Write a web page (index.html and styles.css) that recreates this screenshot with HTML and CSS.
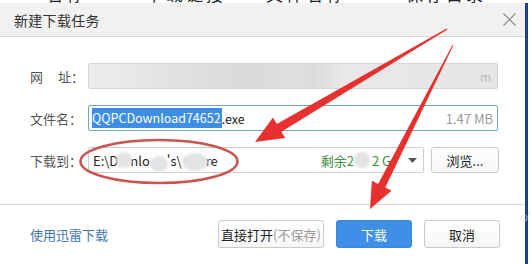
FILE: index.html
```html
<!DOCTYPE html>
<html lang="zh-CN">
<head>
<meta charset="utf-8">
<title>新建下载任务</title>
<link rel="stylesheet" href="styles.css">
</head>
<body>
<div class="page">
  <div class="behind"><span class="behind-text">名称　　　下载链接　　文件名称　　　保存目录　　　操作选项</span></div>
  <div class="frame">
    <div class="dialog">
      <div class="titlebar">
        <span class="title">新建下载任务</span>
        <svg class="close" width="13" height="13" viewBox="0 0 13 13"><path d="M0.5 0.5 L12.5 12.5 M12.5 0.5 L0.5 12.5" stroke="#8a8a8a" stroke-width="1.2" fill="none"/></svg>
      </div>
      <div class="content">
        <div class="row">
          <span class="label">网<span class="gap"></span>址：</span>
          <div class="field url"><span class="url-end">m</span></div>
        </div>
        <div class="row">
          <span class="label">文件名：</span>
          <div class="field name"><span class="sel">QQPCDownload74652</span><span class="ext">.exe</span><span class="size">1.47 MB</span></div>
        </div>
        <div class="row">
          <span class="label">下载到：</span>
          <div class="combo">
            <span class="path">E:\D<span class="blob b1"></span>nlo<span class="blob b2"></span>'s\<span class="blob b3"></span>re</span>
            <span class="free">剩余2<span class="blob b4"></span>2 G</span>
            <svg class="caret" width="9" height="5" viewBox="0 0 9 5"><path d="M0 0 L9 0 L4.5 5 Z" fill="#555"/></svg>
          </div>
          <div class="btn browse">浏览...</div>
        </div>
      </div>
      <div class="footer">
        <span class="link">使用迅雷下载</span>
        <div class="buttons">
          <div class="btn open">直接打开<span class="muted">(不保存)</span></div>
          <div class="btn primary">下载</div>
          <div class="btn cancel">取消</div>
        </div>
      </div>
    </div>
    <div class="edge"></div>
  </div>

  <svg class="marks" width="531" height="264" viewBox="0 0 531 264">
    <g fill="none" stroke="#dcdcdc" stroke-opacity="0.55" stroke-width="1.2">
      <circle cx="524" cy="218" r="3"/>
      <circle cx="532" cy="213" r="3"/>
    </g>
    <ellipse cx="159" cy="161.5" rx="78.5" ry="21.5" fill="none" stroke="#c8403f" stroke-width="2.6" opacity="0.9"/>
    <polygon fill="#e8302f" points="446.6,28.4 276.8,123.9 273.0,117.5 255,142 285.2,138.1 281.4,131.7 447.4,29.6"/>
    <polygon fill="#e8302f" points="452.6,44.7 378.1,184.0 371.9,180.8 370,209 391.5,190.8 385.3,187.6 453.4,45.3"/>
  </svg>
</div>
</body>
</html>
```
FILE: styles.css
```css
* { box-sizing: border-box; }
html, body { margin: 0; padding: 0; }
body {
  width: 531px;
  height: 264px;
  overflow: hidden;
  background: #ffffff;
  font-family: "Noto Sans CJK SC", "Noto Sans", sans-serif;
  color: #333;
}
.page {
  position: relative;
  width: 531px;
  height: 264px;
  display: flex;
  flex-direction: column;
}
.behind {
  height: 3px;
  overflow: hidden;
  background: #fff;
}
.behind-text {
  display: block;
  margin-top: -16px;
  margin-left: 46px;
  font-size: 17px;
  line-height: 19px;
  color: #222;
  white-space: nowrap;
  letter-spacing: 3px;
}
.frame {
  flex: 1;
  display: flex;
}
.dialog {
  width: 525px;
  display: flex;
  flex-direction: column;
  background: #fff;
}
.edge {
  width: 3px;
  background: #1d3f8c;
}
.titlebar {
  height: 34px;
  background: #f1f1f1;
  border-bottom: 1px solid #d6d6d6;
  display: flex;
  align-items: center;
  justify-content: space-between;
  padding: 0 9px 0 14px;
}
.title {
  font-size: 14px;
  color: #333;
  letter-spacing: 0.3px;
}
.close { display: block; }
.content {
  padding: 26px 0 0 30px;
  display: flex;
  flex-direction: column;
  gap: 16px;
  height: 168px;
  border-bottom: 1px solid #dcdcdc;
}
.row {
  display: flex;
  align-items: center;
  height: 26px;
}
.label {
  width: 58px;
  font-size: 13px;
  color: #555;
  display: flex;
}
.gap { width: 15px; }
.field {
  width: 410px;
  height: 26px;
  border: 1px solid #cfcfcf;
  border-radius: 2px;
  display: flex;
  align-items: center;
  font-size: 12.5px;
}
.url {
  background: linear-gradient(90deg, #ececec 0%, #e9e9e9 8%, #e2e2e2 20%, #d9d9d9 40%, #e0e0e0 50%, #dadada 55%, #e8e8e8 62%, #e6e6e6 100%);
  justify-content: flex-end;
  padding-right: 6px;
  border-color: #d4d4d4;
}
.url-end {
  color: #b8b8b8;
  font-size: 12px;
}
.name {
  border-color: #6da4c8;
  padding: 0 4px 0 3px;
  color: #222;
}
.sel {
  background: #3d8ee4;
  color: #fff;
  line-height: 20px;
  padding-right: 1px;
}
.ext { flex: 1; }
.size {
  color: #9a9a9a;
  font-size: 13px;
}
.combo {
  width: 336px;
  height: 26px;
  border: 1px solid #cfcfcf;
  border-radius: 2px;
  display: flex;
  align-items: center;
  padding: 0 6px 0 4px;
  font-size: 13px;
}
.path {
  flex: 1;
  color: #222;
  display: flex;
  align-items: center;
  white-space: nowrap;
}
.blob {
  display: inline-block;
  border-radius: 50%;
  background: #e3e3e3;
  filter: blur(1px);
}
.b1 { width: 16px; height: 16px; margin: 0 -2px 0 -2px; }
.b2 { width: 18px; height: 16px; margin: 8px -1px 0 0; }
.b3 { width: 26px; height: 18px; margin: 4px -2px 0 0; }
.b4 { width: 16px; height: 16px; margin: 0 2px 0 0; }
.free {
  color: #3f8d3f;
  display: flex;
  align-items: center;
  margin-right: 17px;
  white-space: nowrap;
}
.caret { display: block; }
.btn {
  height: 26px;
  border: 1px solid #c9c9c9;
  border-radius: 3px;
  background: linear-gradient(#ffffff, #f6f6f6);
  display: flex;
  align-items: center;
  justify-content: center;
  font-size: 13px;
  color: #222;
}
.browse {
  width: 68px;
  margin-left: 7px;
}
.footer {
  display: flex;
  align-items: center;
  justify-content: space-between;
  padding: 15px 25px 0 30px;
}
.link {
  font-size: 13px;
  color: #3f78ad;
}
.buttons {
  display: flex;
  gap: 12px;
}
.buttons .btn { height: 28px; }
.open { width: 106px; }
.muted { color: #9a9a9a; }
.primary {
  width: 76px;
  background: #3e8fe6;
  border-color: #3a87dc;
  color: #fff;
}
.cancel { width: 76px; }
.marks {
  position: absolute;
  left: 0;
  top: 0;
  pointer-events: none;
}
```
